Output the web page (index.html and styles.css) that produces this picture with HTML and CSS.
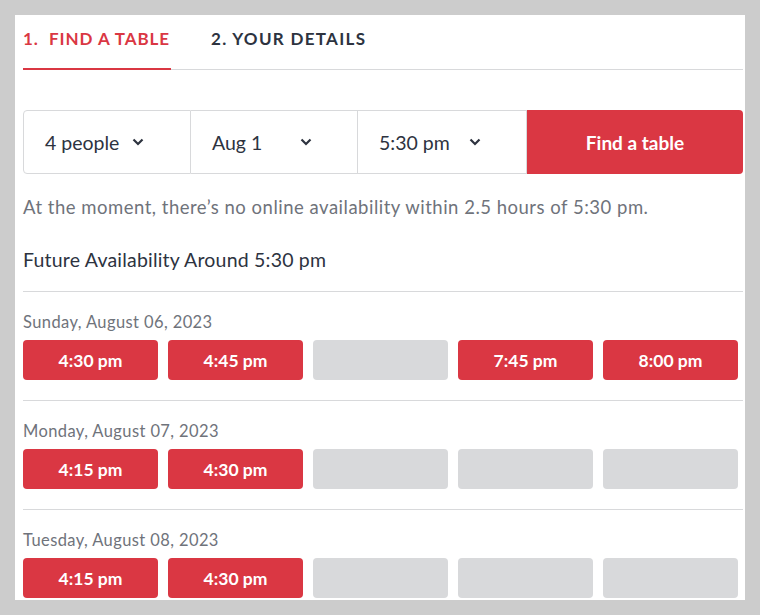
FILE: index.html
```html
<!DOCTYPE html>
<html>
<head>
<meta charset="utf-8">
<link rel="stylesheet" href="styles.css">
</head>
<body>
<div class="panel">
  <div class="tabs">
    <div class="tab active">1.&nbsp; FIND A TABLE</div>
    <div class="tab">2. YOUR DETAILS</div>
  </div>
  <div class="search">
    <div class="field f-people"><span>4 people</span><svg class="chev" viewBox="0 0 12 8" width="12" height="8"><path d="M1.5 1.5 L6 6 L10.5 1.5" fill="none" stroke="#2d333f" stroke-width="2.2"/></svg></div>
    <div class="field f-date"><span>Aug 1</span><svg class="chev" viewBox="0 0 12 8" width="12" height="8"><path d="M1.5 1.5 L6 6 L10.5 1.5" fill="none" stroke="#2d333f" stroke-width="2.2"/></svg></div>
    <div class="field f-time"><span>5:30 pm</span><svg class="chev" viewBox="0 0 12 8" width="12" height="8"><path d="M1.5 1.5 L6 6 L10.5 1.5" fill="none" stroke="#2d333f" stroke-width="2.2"/></svg></div>
    <button class="find">Find a table</button>
  </div>
  <p class="notice">At the moment, there’s no online availability within 2.5 hours of 5:30 pm.</p>
  <h3 class="future">Future Availability Around 5:30 pm</h3>
  <div class="day">
    <div class="date">Sunday, August 06, 2023</div>
    <div class="slots">
      <div class="slot">4:30 pm</div>
      <div class="slot">4:45 pm</div>
      <div class="slot empty"></div>
      <div class="slot">7:45 pm</div>
      <div class="slot">8:00 pm</div>
    </div>
  </div>
  <div class="day">
    <div class="date">Monday, August 07, 2023</div>
    <div class="slots">
      <div class="slot">4:15 pm</div>
      <div class="slot">4:30 pm</div>
      <div class="slot empty"></div>
      <div class="slot empty"></div>
      <div class="slot empty"></div>
    </div>
  </div>
  <div class="day">
    <div class="date">Tuesday, August 08, 2023</div>
    <div class="slots">
      <div class="slot">4:15 pm</div>
      <div class="slot">4:30 pm</div>
      <div class="slot empty"></div>
      <div class="slot empty"></div>
      <div class="slot empty"></div>
    </div>
  </div>
</div>
</body>
</html>
```
FILE: styles.css
```css
html, body {
  margin: 0;
  padding: 0;
  background: #cccccc;
}
body {
  padding: 15px;
  font-family: Lato, "Open Sans", sans-serif;
  color: #2d333f;
}
.panel {
  width: 722px;
  height: 585px;
  background: #ffffff;
  padding-left: 8px;
  overflow: hidden;
}
.tabs {
  display: flex;
  gap: 40px;
  height: 54px;
  width: 720px;
  border-bottom: 1px solid #d8d9db;
}
.tab {
  display: flex;
  align-items: center;
  white-space: nowrap;
  font-size: 17px;
  font-weight: 700;
  letter-spacing: 1.3px;
  color: #2d333f;
  box-sizing: border-box;
  margin-bottom: -1px;
  padding-bottom: 8px;
}
.tab.active {
  color: #da3743;
  border-bottom: 2px solid #da3743;
  width: 148px;
  letter-spacing: 0.95px;
  padding-bottom: 6px;
}
.search {
  display: flex;
  margin-top: 40px;
  height: 64px;
  width: 720px;
}
.field {
  display: flex;
  align-items: center;
  box-sizing: border-box;
  border: 1px solid #d8d9db;
  border-left: none;
  font-size: 19.5px;
  color: #2d333f;
  padding-left: 21px;
}
.f-people {
  width: 168px;
  border-left: 1px solid #d8d9db;
  border-radius: 4px 0 0 4px;
}
.f-people .chev { margin-left: 13px; }
.f-date { width: 167px; }
.f-date .chev { margin-left: 38px; }
.f-time { width: 169px; }
.f-time .chev { margin-left: 19px; }
.find {
  flex: 1;
  border: none;
  border-radius: 0 4px 4px 0;
  background: #da3743;
  color: #ffffff;
  font-family: inherit;
  font-size: 19px;
  font-weight: 700;
}
.notice {
  margin: 20px 0 0;
  font-size: 18.5px;
  letter-spacing: 0.5px;
  line-height: 26px;
  color: #6f737b;
}
.future {
  margin: 27px 0 0;
  font-size: 19.5px;
  letter-spacing: 0.2px;
  font-weight: 400;
  line-height: 26px;
  color: #2d333f;
  padding-bottom: 18px;
}
.day {
  width: 720px;
  border-top: 1px solid #d8d9db;
  padding: 20px 0 20px;
}
.date {
  font-size: 16.5px;
  letter-spacing: 0.4px;
  line-height: 20px;
  color: #6f737b;
  margin-bottom: 8px;
}
.slots {
  display: flex;
  gap: 10px;
}
.slot {
  width: 135px;
  height: 40px;
  border-radius: 4px;
  background: #da3743;
  color: #ffffff;
  font-size: 17.5px;
  font-weight: 700;
  display: flex;
  align-items: center;
  justify-content: center;
}
.slot.empty {
  background: #d8d9db;
}
```
